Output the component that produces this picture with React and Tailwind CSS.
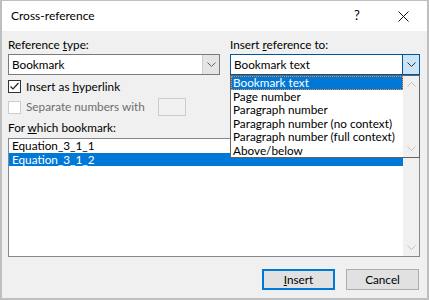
import React from 'react';

const font = { fontFamily: 'Lato, "Liberation Sans", sans-serif' };

const Chevron = ({ className = '', up = false }) => (
  <svg width="9" height="5" viewBox="0 0 9 5" className={className}>
    <polyline
      points={up ? '0.5,4.5 4.5,0.5 8.5,4.5' : '0.5,0.5 4.5,4.5 8.5,0.5'}
      fill="none"
      stroke="currentColor"
      strokeWidth="1"
    />
  </svg>
);

const Checkbox = ({ checked, disabled }) => (
  <div
    className={`w-[13px] h-[13px] border bg-white flex items-center justify-center ${
      disabled ? 'border-[#cccccc]' : 'border-[#333333]'
    }`}
  >
    {checked && (
      <svg width="11" height="11" viewBox="0 0 11 11">
        <polyline points="1.5,5.5 4,8 9.5,2" fill="none" stroke="#222222" strokeWidth="1.2" />
      </svg>
    )}
  </div>
);

const Select = ({ value, open }) => (
  <div
    className={`h-[21px] flex border bg-white ${open ? 'border-[#005499]' : 'border-[#7a7a7a]'}`}
  >
    <div className="flex-1 pl-[3px] flex items-center text-black">{value}</div>
    <div
      className={`w-[17px] flex items-center justify-center ${
        open ? 'bg-[#cce4f7] border-l border-[#005499] text-[#333333]' : 'bg-[#e5e5e5] border-l border-[#cccccc] text-[#606060]'
      }`}
    >
      <Chevron />
    </div>
  </div>
);

const dropdownItems = [
  'Bookmark text',
  'Page number',
  'Paragraph number',
  'Paragraph number (no context)',
  'Paragraph number (full context)',
  'Above/below',
];

export default function App() {
  return (
    <div
      className="w-[429px] h-[300px] bg-[#f0f0f0] border-l-2 border-r-2 border-t border-b-2 border-[#bfbfbf] flex flex-col text-[11.75px] text-black overflow-hidden"
      style={font}
    >
      {/* Title bar */}
      <div className="h-[30px] bg-white flex items-center shrink-0">
        <div className="pl-[9px] flex-1 text-[12px]">Cross-reference</div>
        <div className="w-[46px] text-center text-[13px]">?</div>
        <div className="w-[46px] flex items-center justify-center mr-[1px]">
          <svg width="11" height="11" viewBox="0 0 11 11">
            <path d="M0.5 0.5 L10.5 10.5 M10.5 0.5 L0.5 10.5" stroke="#111111" strokeWidth="1" />
          </svg>
        </div>
      </div>

      {/* Body */}
      <div className="flex-1 flex flex-col pl-[6px] pr-[7px] pt-[6px]">
        <div className="flex gap-[10px]">
          {/* Left column */}
          <div className="w-[212px] flex flex-col">
            <div className="h-4 leading-4">
              Reference <span className="underline">t</span>ype:
            </div>
            <div className="mt-[1px]">
              <Select value="Bookmark" />
            </div>
            <div className="mt-[5px] flex items-center gap-[5px] h-[13px]">
              <Checkbox checked />
              <span>
                Insert as <span className="underline">h</span>yperlink
              </span>
            </div>
            <div className="mt-[5px] flex items-center h-[18px]">
              <Checkbox disabled />
              <span className="ml-[5px] text-[#6d6d6d]">Separate numbers with</span>
              <div className="ml-auto mr-[34px] w-[28px] h-[18px] border border-[#cccccc] bg-[#f0f0f0]" />
            </div>
          </div>

          {/* Right column */}
          <div className="flex-1 flex flex-col">
            <div className="h-4 leading-4">
              Insert <span className="underline">r</span>eference to:
            </div>
            <div className="mt-[1px] relative">
              <Select value="Bookmark text" open />
              {/* Open dropdown list */}
              <div className="absolute left-0 right-0 top-full z-10 h-[83px] bg-white border border-[#646464] flex">
                <div className="flex-1 flex flex-col">
                  {dropdownItems.map((item, i) => (
                    <div
                      key={item}
                      className={`h-[13.5px] leading-[13.5px] pl-[2px] whitespace-nowrap ${
                        i === 0 ? 'bg-[#0078d7] text-white outline-1 outline-dotted outline-[#ff8728] -outline-offset-1' : ''
                      }`}
                    >
                      {item}
                    </div>
                  ))}
                </div>
                <div className="w-[16px] bg-[#f0f0f0] flex flex-col items-center justify-between py-[6px] text-[#c2c2c2]">
                  <Chevron up />
                  <Chevron />
                </div>
              </div>
            </div>
          </div>
        </div>

        {/* Bookmark list */}
        <div className="mt-[4px] h-4 leading-4">
          For <span className="underline">w</span>hich bookmark:
        </div>
        <div className="mt-[2px] h-[119px] border border-[#828790] bg-white flex">
          <div className="flex-1 flex flex-col">
            <div className="h-[13.5px] leading-[13.5px] pl-[3px]">Equation_3_1_1</div>
            <div className="h-[13.5px] leading-[13.5px] pl-[3px] bg-[#0078d7] text-white">Equation_3_1_2</div>
          </div>
          <div className="w-[16px] bg-[#f0f0f0] flex flex-col items-center justify-end pb-[6px] text-[#c2c2c2]">
            <Chevron />
          </div>
        </div>

        {/* Buttons */}
        <div className="mt-[12px] flex justify-end gap-[11px] pr-[1px]">
          <button className="w-[73px] h-[21px] bg-[#e1e1e1] border-2 border-[#0078d7] flex items-center justify-center">
            <span>
              <span className="underline">I</span>nsert
            </span>
          </button>
          <button className="w-[73px] h-[21px] bg-[#e1e1e1] border border-[#adadad] flex items-center justify-center">
            Cancel
          </button>
        </div>
      </div>
    </div>
  );
}
